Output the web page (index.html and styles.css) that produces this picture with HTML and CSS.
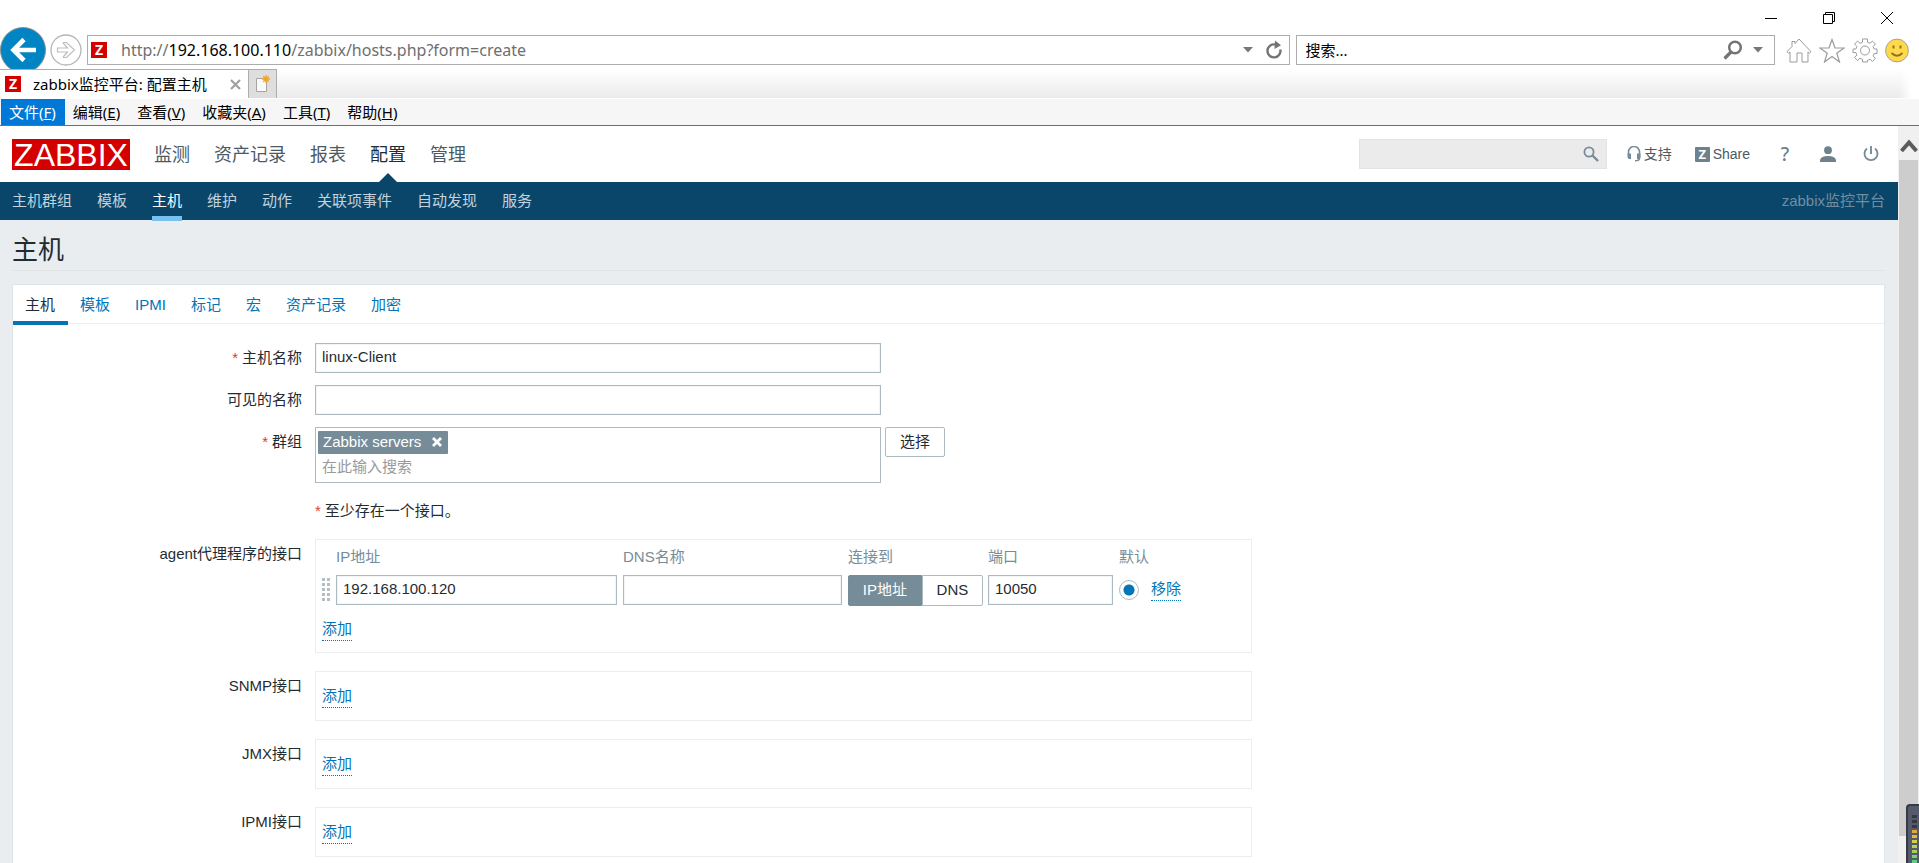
FILE: index.html
```html
<!DOCTYPE html>
<html lang="zh-CN">
<head>
<meta charset="utf-8">
<title>zabbix监控平台: 配置主机</title>
<link rel="stylesheet" href="styles.css">
</head>
<body>
<div class="browser">
  <div class="window-controls">
    <button class="win-btn" aria-label="最小化"><svg width="14" height="14" viewBox="0 0 14 14"><path d="M1 7.5h12" stroke="#000" fill="none"/></svg></button>
    <button class="win-btn" aria-label="还原"><svg width="14" height="14" viewBox="0 0 14 14"><path d="M1.500 3.500h9v9h-9zM3.500 3.500v-2h9v9h-2" stroke="#000" fill="none"/></svg></button>
    <button class="win-btn" aria-label="关闭"><svg width="14" height="14" viewBox="0 0 14 14"><path d="M1 1l12 12M13 1L1 13" stroke="#000" fill="none"/></svg></button>
  </div>
  <div class="nav-bar">
    <button class="back" aria-label="后退"><svg width="46" height="46" viewBox="0 0 46 46"><circle cx="23" cy="23" r="22.500" fill="#0084c4" stroke="#8a9095"/><path d="M36 23H14M24 12.500L13.500 23L24 33.500" stroke="#fff" stroke-width="4.600" fill="none"/></svg></button>
    <button class="forward" aria-label="前进"><svg width="32" height="32" viewBox="0 0 32 32"><circle cx="16" cy="16" r="15" fill="#fff" stroke="#b4b4b4" stroke-width="1.300"/><path d="M7.500 14h10l-4-4.500V8.500h3l8 7.500-8 7.500h-3v-1l4-4.500h-10z" fill="none" stroke="#bdbdbd" stroke-width="1.200"/></svg></button>
    <div class="address">
      <span class="favicon">Z</span>
      <div class="url" role="textbox" contenteditable="true" aria-label="地址" spellcheck="false">http://<b>192.168.100.110</b>/zabbix/hosts.php?form=create</div>
      <button class="plain" aria-label="展开地址"><svg width="10" height="6" viewBox="0 0 10 6"><path d="M0 0h10L5 5.500z" fill="#777"/></svg></button>
      <button class="plain" aria-label="刷新"><svg width="18" height="20" viewBox="0 0 18 20"><path d="M10 4.500A6.500 6.500 0 1 0 15.300 9.500" fill="none" stroke="#747474" stroke-width="2.400"/><path d="M10 0.500L16 5.200 9.500 9z" fill="#747474"/></svg></button>
    </div>
    <div class="web-search">
      <input type="text" value="搜索..." aria-label="搜索">
      <button class="plain" aria-label="执行搜索"><svg width="20" height="20" viewBox="0 0 20 20"><circle cx="12" cy="7.500" r="5.800" fill="none" stroke="#747474" stroke-width="2.500"/><path d="M8 12L1.500 18.500" stroke="#747474" stroke-width="3.200"/></svg></button>
      <button class="plain" aria-label="搜索选项"><svg width="10" height="6" viewBox="0 0 10 6"><path d="M0 0h10L5 5.500z" fill="#777"/></svg></button>
    </div>
    <div class="tools">
      <button class="plain" aria-label="主页"><svg width="26" height="25" viewBox="0 0 26 25"><path d="M4 14l-1.500 1L1 13.700 6 8.500V3.500h3V5.500L13 1l12 12.700-1.500 1.300-1.500-1V24h-6v-9h-5v9H4z" fill="none" stroke="#9b9b9b"/></svg></button>
      <button class="plain" aria-label="收藏夹"><svg width="26" height="25" viewBox="0 0 26 25"><path d="M13 1.500l3 8.500h9l-7.200 5.200L20.500 24 13 18.500 5.500 24l2.700-8.800L1 10h9z" fill="none" stroke="#9b9b9b" stroke-width="1.200"/></svg></button>
      <button class="plain" aria-label="设置"><svg width="26" height="25" viewBox="0 0 26 25"><path d="M10.500 1h5v3.200l2.500 1.100 2.400-2.300 3 3-2.300 2.500 1.100 2.500h2.800v4.500h-2.800l-1.100 2.500 2.300 2.500-3 3-2.400-2.300-2.500 1.100V24h-5v-2.700L8 20.200l-2.400 2.300-3-3L4.900 17l-1.100-2.500H1V11h2.800l1.100-2.500-2.300-2.500 3-3L8 5.300l2.500-1.100z" fill="none" stroke="#9b9b9b"/><circle cx="13" cy="12.500" r="4.500" fill="none" stroke="#9b9b9b"/></svg></button>
      <button class="plain" aria-label="反馈"><svg width="24" height="25" viewBox="0 0 24 25"><circle cx="12" cy="12.500" r="11.400" fill="#ffd94a" stroke="#a5a29a"/><path d="M8.500 7.500v3M15.500 7.500v3" stroke="#8b7427" stroke-width="2"/><path d="M6.500 15q5.500 5.500 11 0" stroke="#8b7427" stroke-width="1.800" fill="none"/></svg></button>
    </div>
  </div>
  <div class="tab-strip">
    <div class="page-tab"><span class="favicon">Z</span><span class="page-tab-title">zabbix监控平台: 配置主机</span><button class="plain" aria-label="关闭标签页"><svg width="11" height="11" viewBox="0 0 11 11"><path d="M1 1l9 9M10 1l-9 9" stroke="#a0a0a0" stroke-width="2.200"/></svg></button></div>
    <button class="new-tab" aria-label="新建标签页"><svg width="16" height="18" viewBox="0 0 16 18"><path d="M1.500 3.500h10v13h-10z" fill="#fafafa" stroke="#a4a4a4"/><path d="M11 0v8M7 4h8M8.200 1.200l5.600 5.600M13.800 1.200L8.200 6.800" stroke="#f2a61f" stroke-width="1.300"/></svg></button>
    <div class="strip-fill"></div>
  </div>
  <nav class="menu" aria-label="菜单">
    <button class="menu-item open">文件(<u>F</u>)</button>
    <button class="menu-item">编辑(<u>E</u>)</button>
    <button class="menu-item">查看(<u>V</u>)</button>
    <button class="menu-item">收藏夹(<u>A</u>)</button>
    <button class="menu-item">工具(<u>T</u>)</button>
    <button class="menu-item">帮助(<u>H</u>)</button>
  </nav>
</div>

<div class="viewport">
  <div class="page">
    <header class="top">
      <a class="logo" href="#">ZABBIX</a>
      <nav class="main-nav">
        <a href="#">监测</a><a href="#">资产记录</a><a href="#">报表</a><a href="#" class="current">配置</a><a href="#">管理</a>
      </nav>
      <div class="search">
        <input type="text" aria-label="搜索">
        <button class="plain" aria-label="搜索"><svg width="16" height="16" viewBox="0 0 16 16"><circle cx="6" cy="6" r="4.600" fill="none" stroke="#768d99" stroke-width="1.800"/><path d="M9.500 9.500L15 15" stroke="#768d99" stroke-width="2.400"/></svg></button>
      </div>
      <a class="top-link support" href="#"><svg width="14" height="16" viewBox="0 0 14 16"><path d="M1.500 9V6a5.500 5.500 0 0 1 11 0V12q0 2.800-4.500 2.800" fill="none" stroke="#768d99" stroke-width="1.600"/><path d="M.500 7.500h3.500v5.500h-1.500q-2 0-2-2zM10 7.500h3.500v3.500q0 2-2 2h-1.500z" fill="#768d99"/></svg>支持</a>
      <a class="top-link share" href="#"><span class="share-mark">Z</span>Share</a>
      <a class="top-icon help" href="#" aria-label="帮助">?</a>
      <a class="top-icon" href="#" aria-label="用户"><svg width="16" height="16" viewBox="0 0 16 16"><circle cx="8" cy="4.200" r="3.900" fill="#6d828e"/><path d="M0 16v-2q1-4 8-4t8 4v2z" fill="#6d828e"/></svg></a>
      <a class="top-icon" href="#" aria-label="退出"><svg width="16" height="16" viewBox="0 0 16 16"><path d="M4 2.500a6.500 6.500 0 1 0 8 0" fill="none" stroke="#768d99" stroke-width="1.900"/><path d="M8 0v8" stroke="#768d99" stroke-width="1.900"/></svg></a>
    </header>
    <nav class="sub-nav">
      <a href="#">主机群组</a><a href="#">模板</a><a href="#" class="current">主机</a><a href="#">维护</a><a href="#">动作</a><a href="#">关联项事件</a><a href="#">自动发现</a><a href="#">服务</a>
      <span class="server-name">zabbix监控平台</span>
    </nav>
    <main class="content">
      <h1>主机</h1>
      <form class="panel">
        <div class="tabs">
          <a href="#" class="current">主机</a><a href="#">模板</a><a href="#">IPMI</a><a href="#">标记</a><a href="#">宏</a><a href="#">资产记录</a><a href="#">加密</a>
        </div>
        <div class="fields">
          <div class="row">
            <label for="host" class="required">主机名称</label>
            <input id="host" class="text wide" type="text" value="linux-Client">
          </div>
          <div class="row">
            <label for="visible">可见的名称</label>
            <input id="visible" class="text wide" type="text">
          </div>
          <div class="row">
            <label for="groups" class="required">群组</label>
            <div class="with-button">
              <div class="multiselect wide">
                <span class="tag">Zabbix servers<button type="button" class="plain" aria-label="移除群组"><svg width="10" height="10" viewBox="0 0 10 10"><path d="M1 1l8 8M9 1L1 9" stroke="#fff" stroke-width="2.800"/></svg></button></span>
                <input id="groups" type="text" placeholder="在此输入搜索">
              </div>
              <button type="button" class="select">选择</button>
            </div>
          </div>
        </div>
        <div class="interfaces">
          <div class="row"><span></span><span class="note required">至少存在一个接口。</span></div>
          <div class="row">
            <span class="label">agent代理程序的接口</span>
            <div class="box agent">
              <table>
                <thead><tr><th class="c-drag"></th><th class="c-ip">IP地址</th><th class="c-dns">DNS名称</th><th class="c-use">连接到</th><th class="c-port">端口</th><th class="c-def">默认</th><th></th></tr></thead>
                <tbody><tr>
                  <td><svg class="drag" width="8" height="24" viewBox="0 0 8 24"><path d="M0 1.500h8M0 6.500h8M0 11.500h8M0 16.500h8M0 21.500h8" stroke="#b4bfc5" stroke-width="3" stroke-dasharray="3 2"/></svg></td>
                  <td><input class="text" type="text" value="192.168.100.120" aria-label="IP地址"></td>
                  <td><input class="text" type="text" aria-label="DNS名称"></td>
                  <td><div class="segmented"><input type="radio" name="use" id="use-ip" checked><label for="use-ip">IP地址</label><input type="radio" name="use" id="use-dns"><label for="use-dns">DNS</label></div></td>
                  <td><input class="text" type="text" value="10050" aria-label="端口"></td>
                  <td><input class="radio" type="radio" name="default" checked aria-label="默认"></td>
                  <td><a class="action" href="#">移除</a></td>
                </tr></tbody>
              </table>
              <a class="action" href="#">添加</a>
            </div>
          </div>
          <div class="row"><span class="label">SNMP接口</span><div class="box"><a class="action" href="#">添加</a></div></div>
          <div class="row"><span class="label">JMX接口</span><div class="box"><a class="action" href="#">添加</a></div></div>
          <div class="row"><span class="label">IPMI接口</span><div class="box"><a class="action" href="#">添加</a></div></div>
        </div>
      </form>
    </main>
  </div>
  <div class="scrollbar">
    <button class="plain scroll-up" aria-label="向上滚动"><svg width="18" height="14" viewBox="0 0 18 14"><path d="M1.500 12L9 3.500 16.500 12" fill="none" stroke="#5c5c5c" stroke-width="4"/></svg></button>
    <div class="thumb"></div>
  </div>
</div>
<div class="meter" aria-hidden="true"><span class="meter-off"></span><span class="meter-on"></span></div>
</body>
</html>
```
FILE: styles.css
```css
* { box-sizing: border-box; }

body {
  margin: 0;
  height: 100vh;
  overflow: hidden;
  display: flex;
  flex-direction: column;
  background: #fff;
  color: #1f2c33;
  font: 15px/20px "Liberation Sans", "Noto Sans CJK SC", sans-serif;
}

button, input { font: inherit; color: inherit; margin: 0; }
button { cursor: pointer; }
a { color: #0275b8; text-decoration: none; }
svg { display: block; }

.plain { display: flex; padding: 0; border: 0; background: none; }

/* Browser window */
.browser {
  flex: none;
  color: #000;
  font-family: "Noto Sans", "Noto Sans CJK SC", sans-serif;
}

.window-controls {
  display: flex;
  justify-content: flex-end;
  gap: 44px;
  height: 27px;
  padding: 11px 25px 0 0;
}
.win-btn { display: flex; height: 14px; padding: 0; border: 0; background: none; }

.nav-bar { display: flex; align-items: center; height: 42px; padding-top: 4px; }
.back, .forward { flex: none; padding: 0; border: 0; background: none; }
.back { align-self: flex-start; width: 46px; height: 42px; margin-top: -4px; overflow: hidden; }
.forward { width: 32px; margin: 0 5px 0 4px; }

.address, .web-search {
  display: flex;
  align-items: center;
  height: 30px;
  border: 1px solid #adadad;
}
.address { flex: 1191; gap: 12px; padding: 0 6px 0 3px; }
.url { flex: 1; margin-left: 2px; color: #6f6f6f; font-size: 16px; white-space: nowrap; outline: 0; }
.url b { color: #000; font-weight: 400; }
.web-search { flex: 457; gap: 10px; margin-left: 6px; padding: 0 11px 0 8px; }
.web-search input { flex: 1; min-width: 0; padding: 0; border: 0; outline: 0; background: none; }
.tools { display: flex; gap: 7px; padding: 0 10px 0 11px; }

.favicon {
  flex: none;
  width: 16px;
  height: 16px;
  background: #d40000;
  color: #fff;
  font: bold 14px/16px "Noto Sans", sans-serif;
  text-align: center;
}

.tab-strip { display: flex; height: 30px; border-bottom: 1px solid #fff; }
.page-tab {
  display: flex;
  align-items: center;
  width: 249px;
  padding: 0 7px 0 5px;
  border-top: 1px solid #adadad;
  border-right: 1px solid #adadad;
}
.page-tab-title { flex: 1; margin-left: 12px; white-space: nowrap; }
.new-tab {
  display: flex;
  align-items: center;
  justify-content: center;
  width: 28px;
  padding: 0;
  border: 1px solid #adadad;
  border-width: 1px 1px 0 0;
  background: #dedede;
}
.strip-fill {
  flex: 1;
  background: linear-gradient(90deg, transparent calc(100% - 20px), #fff calc(100% - 8px)), linear-gradient(#fff, #ebebeb);
}

.menu {
  display: flex;
  height: 27px;
  padding-left: 1px;
  background: #f6f6f6;
  border-bottom: 1px solid #6e6e6e;
}
.menu-item { padding: 0 9px 0 8px; border: 0; background: none; white-space: nowrap; }
.menu-item.open { background: #0078d7; color: #fff; }

/* Page */
.viewport { flex: 1; min-height: 0; display: flex; }
.page { flex: 1; min-width: 0; overflow: hidden; background: #e9edf0; }

.top { display: flex; align-items: center; height: 56px; padding: 0 19px 0 12px; background: #fff; }
.logo {
  width: 118px;
  height: 31px;
  background: #d40000;
  color: #fff;
  font: 32px/32px "Liberation Sans", sans-serif;
  text-align: center;
}
.main-nav { display: flex; gap: 24px; height: 56px; margin: 0 auto 0 24px; font-size: 18px; line-height: 58px; }
.main-nav a { color: #4c5a63; white-space: nowrap; }
.main-nav .current { position: relative; color: #1f2c33; }
.main-nav .current::after {
  content: "";
  position: absolute;
  left: 50%;
  bottom: 0;
  margin-left: -9px;
  border: 9px solid transparent;
  border-top: 0;
  border-bottom-color: #0a466a;
}
.search {
  display: flex;
  align-items: center;
  width: 248px;
  height: 30px;
  padding: 0 7px;
  border: 1px solid #dfe4e7;
  background: #ebebeb;
}
.search input { flex: 1; min-width: 0; border: 0; outline: 0; background: none; }
.top-link { display: flex; align-items: center; gap: 3px; color: #4c5a63; font-size: 14px; }
.support { margin-left: 20px; }
.share { margin-left: 23px; }
.share-mark {
  width: 15px;
  height: 15px;
  border-radius: 1px;
  background: #6d828e;
  color: #fff;
  font: bold 13px/15px "Noto Sans", sans-serif;
  text-align: center;
}
.top-icon { width: 16px; margin-left: 27px; color: #6d828e; text-align: center; }
.help { font: 500 19px/20px "Noto Sans", sans-serif; }

.sub-nav { display: flex; gap: 25px; height: 38px; padding: 0 13px 0 12px; background: #0a466a; line-height: 38px; }
.sub-nav a { color: #c3d2dc; white-space: nowrap; }
.sub-nav .current { height: 39px; border-bottom: 5px solid #78c0ef; color: #fff; }
.server-name { margin-left: auto; color: #6f8ea2; }

.content { padding: 15px 13px 0 12px; }
h1 { margin: 0 0 13px; padding-bottom: 4px; border-bottom: 1px solid #dfe4e7; font-size: 26px; font-weight: 400; line-height: 31px; }
.panel { min-height: 600px; border: 1px solid #dfe4e7; background: #fff; }

.tabs { display: flex; height: 39px; border-bottom: 1px solid #ebeef0; }
.tabs a { flex: none; height: 40px; padding: 0 13px 0 12px; line-height: 40px; }
.tabs .current { border-bottom: 4px solid #0275b8; color: #1f2c33; }

.fields { display: flex; flex-direction: column; gap: 12px; padding-top: 19px; }
.interfaces { display: flex; flex-direction: column; gap: 18px; padding: 18px 0; }
.row { display: grid; grid-template-columns: 289px 1fr; column-gap: 13px; }
.row > label, .label { padding-top: 5px; text-align: right; }
.required::before { content: "*"; margin-right: 4px; color: #e33734; }

.text { width: 100%; height: 30px; padding: 0 6px 3px; border: 1px solid #acbbc2; background: #fff; outline: 0; box-shadow: inset 0 0 0 1px #f2f4f5; }
.wide { width: 566px; }
.with-button { display: flex; align-items: flex-start; gap: 4px; }
.multiselect { display: flex; flex-direction: column; align-items: flex-start; height: 56px; padding: 3px 2px 2px; border: 1px solid #acbbc2; }
.tag { display: flex; align-items: center; gap: 11px; height: 23px; padding: 0 6px 0 5px; border-radius: 1px; background: #768d99; color: #fff; }
.multiselect input { width: 100%; height: 27px; padding: 0 4px; border: 0; outline: 0; background: none; }
.multiselect input::placeholder { color: #9a9a9a; opacity: 1; }
.select { width: 60px; height: 30px; padding: 0; border: 1px solid #acbbc2; border-radius: 2px; background: #fff; }

.box { width: 937px; height: 50px; padding: 14px 6px 0; border: 1px solid #ebeef0; }
.agent { height: 114px; padding-top: 4px; }
table { width: 100%; margin-bottom: 12px; border-spacing: 0; table-layout: fixed; }
th { height: 29px; padding: 0 0 4px; color: #768d99; font-weight: 400; text-align: left; white-space: nowrap; }
td { height: 34px; padding: 0 6px 0 0; }
.c-drag { width: 14px; }
.c-ip { width: 287px; }
.c-dns { width: 225px; }
.c-use { width: 140px; }
.c-port { width: 131px; }
.c-def { width: 32px; }
.segmented { display: flex; width: 135px; }
.segmented input { position: absolute; opacity: 0; }
.segmented label { flex: 61; height: 31px; border: 1px solid #acbbc2; border-radius: 0 2px 2px 0; line-height: 28px; text-align: center; }
.segmented label:first-of-type { flex: 74; border-radius: 2px 0 0 2px; }
.segmented input:checked + label { border-color: #768d99; background: #768d99; color: #fff; }
.radio { display: block; appearance: none; width: 20px; height: 20px; border: 1px solid #acbbc2; border-radius: 50%; background: radial-gradient(circle, #0275b8 5px, #fff 6px); }
.action { display: inline-block; padding-bottom: 1px; border-bottom: 1px dotted #0275b8; line-height: 20px; white-space: nowrap; }

/* Scrollbar and level meter */
.scrollbar { flex: none; display: flex; flex-direction: column; width: 21px; padding: 13px 1px 27px; background: #f0f0f0; }
.scroll-up { justify-content: center; height: 21px; }
.thumb { flex: 1; background: #cdcdcd; }

.meter {
  position: absolute;
  right: 0;
  bottom: 0;
  width: 13px;
  height: 59px;
  padding: 9px 2px 0 4px;
  border: 1px solid #363b46;
  border-width: 2px 0 0 2px;
  border-radius: 4px 0 0 0;
  background: #555b6b;
}
.meter span { display: block; }
.meter-off { height: 15px; background: repeating-linear-gradient(#343844 0 3px, #555b6b 3px 5px); }
.meter-on {
  height: 33px;
  background: repeating-linear-gradient(transparent 0 3px, #555b6b 3px 5px), linear-gradient(#e8a33c, #d6d04b 35%, #a9cf5c 65%, #4fd08f);
}
```
